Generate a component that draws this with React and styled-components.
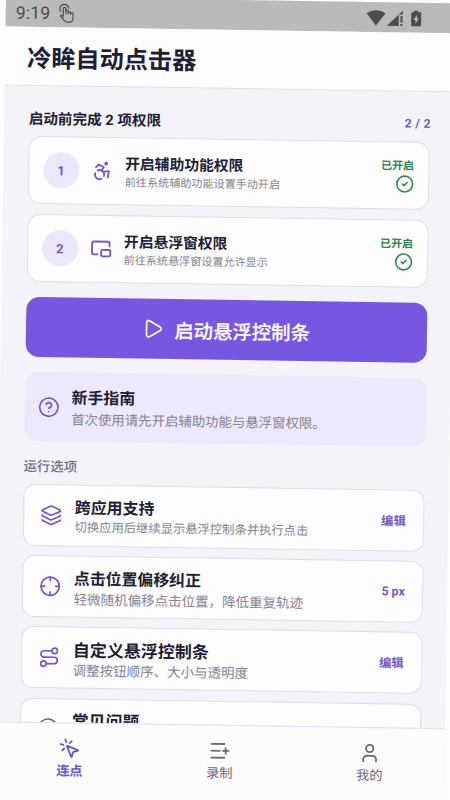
import React from 'react';
import {
  Accessibility,
  PictureInPicture2,
  CircleCheck,
  CircleQuestionMark,
  Play,
  Layers,
  Crosshair,
  Route,
  MousePointerClick,
  User,
} from 'lucide-react';
import styled, { createGlobalStyle } from 'styled-components';

const GlobalStyle = createGlobalStyle`
  * {
    box-sizing: border-box;
  }
  body {
    margin: 0;
    background: #fdfdfe;
    font-family: Roboto, 'Noto Sans CJK SC', sans-serif;
    color: #221d36;
  }
`

const Page = styled.div`
  width: 450px;
  height: 800px;
  overflow: hidden;
`

const Screen = styled.div`
  width: 450px;
  height: 820px;
  display: flex;
  flex-direction: column;
  background: #f4f3f9;
  transform-origin: 0 0;
  transform: translate(6px, -3.5px) rotate(0.86deg);
`

const StatusBar = styled.div`
  height: 29.5px;
  flex: none;
  display: flex;
  align-items: center;
  padding: 2px 33.5px 0 10px;
  background: #bababa;
  color: #4c4c4c;
`

const Clock = styled.span`
  font-size: 17.5px;
  letter-spacing: 0.2px;
  margin-right: 7px;
`

const StatusIcons = styled.div`
  margin-left: auto;
  display: flex;
  align-items: center;
  svg {
    display: block;
  }
`

const Header = styled.header`
  height: 59.5px;
  flex: none;
  display: flex;
  align-items: center;
  padding: 6px 0 0 22px;
  background: #fdfdfe;
  border-bottom: 1px solid #e1dfea;
`

const AppTitle = styled.h1`
  margin: 0;
  font-size: 24.2px;
  line-height: 30px;
  font-weight: 700;
`

const Content = styled.main`
  height: 636.3px;
  flex: none;
  overflow: hidden;
  padding: 23px 24.4px 0 24.6px;
`

const SectionHead = styled.div`
  display: flex;
  justify-content: space-between;
  align-items: center;
  height: 18px;
  margin-bottom: 9.2px;
`

const SectionTitle = styled.h2`
  margin: 0;
  padding-top: 2px;
  font-size: 14.6px;
  line-height: 18px;
  font-weight: 700;
`

const Count = styled.span`
  margin-right: -1px;
  font-size: 12.2px;
  font-weight: 700;
  letter-spacing: 0.3px;
  color: #7459c4;
`

const PermissionCard = styled.div`
  height: 68.2px;
  margin-bottom: 9.6px;
  padding: 0 14px;
  display: flex;
  align-items: center;
  gap: 12px;
  background: #fdfdfe;
  border: 1.3px solid #e0ddeb;
  border-radius: 13px;
`

const StepBadge = styled.div`
  width: 36px;
  height: 36px;
  flex: none;
  display: flex;
  align-items: center;
  justify-content: center;
  border-radius: 50%;
  background: #ece8fc;
  color: #7459c4;
  font-size: 13px;
  font-weight: 700;
`

const IconSlot = styled.div`
  display: flex;
  flex: none;
  color: #7355cb;
`

const Texts = styled.div`
  flex: 1;
  min-width: 0;
  display: flex;
  flex-direction: column;
  padding-top: ${props => props.$top || 0}px;
  white-space: nowrap;
`

const ItemTitle = styled.span`
  font-size: ${props => props.$size}px;
  line-height: 20px;
  font-weight: 700;
`

const ItemNote = styled.span`
  min-height: ${props => props.$line}px;
  font-size: ${props => props.$size}px;
  line-height: ${props => props.$line}px;
  color: #87838f;
`

const Granted = styled.div`
  display: flex;
  flex-direction: column;
  align-items: flex-end;
  color: #2f8553;
  font-size: 11px;
  line-height: 16px;
  font-weight: 700;
`

const StartButton = styled.button`
  width: 100%;
  height: 60px;
  margin: 15.3px 0 15px;
  padding: 0;
  display: flex;
  align-items: center;
  justify-content: center;
  gap: 10px;
  border: none;
  border-radius: 13px;
  background: #7857e0;
  color: #fdfcff;
  font-family: inherit;
  font-size: 19.4px;
  font-weight: 500;
  -webkit-text-stroke: 0.2px #fdfcff;
`

const Guide = styled.div`
  height: 68.6px;
  padding: 0 13px;
  display: flex;
  align-items: center;
  gap: 12px;
  border-radius: 12px;
  background: #ece9fc;
`

const GroupLabel = styled.div`
  margin: 17px 0 8.2px;
  font-size: 13.4px;
  line-height: 18px;
  font-weight: 500;
  color: #716d80;
`

const OptionRow = styled.div`
  height: 61.5px;
  margin-bottom: 9.6px;
  padding: 0 17px 0 16px;
  display: flex;
  align-items: center;
  gap: 13px;
  background: #fdfdfe;
  border: 1.3px solid #e0ddeb;
  border-radius: 12px;
`

const OptionAction = styled.span`
  font-size: 12.3px;
  font-weight: 700;
  color: #7459c4;
`

const TabBar = styled.nav`
  flex: 1;
  display: flex;
  align-items: flex-start;
  background: #fcfcfd;
  border-top: 1px solid #e1dfea;
`

const Tab = styled.div`
  flex: 1;
  padding-top: 14px;
  display: flex;
  flex-direction: column;
  align-items: center;
  gap: 3px;
  font-size: 13.2px;
  line-height: 18px;
  font-weight: ${props => props.$active ? 700 : 400};
  color: ${props => props.$active ? "#7052cc" : "#6d697a"};
`

const options = [
  { icon: Layers, title: '跨应用支持', note: '切换应用后继续显示悬浮控制条并执行点击', action: '编辑', size: 15.9, noteSize: 12.3, line: 18 },
  { icon: Crosshair, title: '点击位置偏移纠正', note: '轻微随机偏移点击位置，降低重复轨迹', action: '5 px', size: 15.9, noteSize: 13.5, line: 20 },
  { icon: Route, title: '自定义悬浮控制条', note: '调整按钮顺序、大小与透明度', action: '编辑', size: 17, noteSize: 13.5, line: 20 },
  { icon: CircleQuestionMark, title: '常见问题', note: '', action: '', size: 16.9, noteSize: 13.5, line: 20 },
]

function TapIcon() {
  return (
    <svg width="18" height="20" viewBox="0 0 17 20" fill="none" stroke="currentColor" strokeWidth="1.2" strokeLinecap="round" strokeLinejoin="round">
      <path d="M2.3 8.2A4.6 4.6 0 1 1 10.6 4.8" />
      <path d="M5 13.6V5.3a1.3 1.3 0 0 1 2.6 0v5M7.6 10V8a1.2 1.2 0 0 1 2.4 0v2.4M10 9.5a1.2 1.2 0 0 1 2.4.2v1.2M12.4 10.4a1.2 1.2 0 0 1 2.4.2v4.2c0 2.4-1.5 3.9-3.8 3.9H9.2c-1.4 0-2.2-.5-3-1.5l-4-4.6c.9-1.2 2-.8 2.8.3" />
    </svg>
  )
}

function ListAddIcon() {
  return (
    <svg width="22" height="22" viewBox="0 0 24 24" fill="none" stroke="currentColor" strokeWidth="2" strokeLinecap="round" strokeLinejoin="round">
      <path d="M17 4.500H3M12 12H3M17 19.500H3M18.500 9v6M21.500 12h-6" />
    </svg>
  )
}

function PermissionItem({ step, icon, title, note }) {
  const Icon = icon
  return (
    <PermissionCard>
      <StepBadge>{ step }</StepBadge>
      <IconSlot><Icon size={ 22 } /></IconSlot>
      <Texts $top={ 3 }>
        <ItemTitle $size={ 14.8 }>{ title }</ItemTitle>
        <ItemNote $size={ 11.1 } $line={ 17 }>{ note }</ItemNote>
      </Texts>
      <Granted>
        已开启
        <CircleCheck size={ 19 } />
      </Granted>
    </PermissionCard>
  )
}

function App() {
  return (
    <Page>
      <GlobalStyle />
      <Screen>
        <StatusBar>
          <Clock>9:19</Clock>
          <TapIcon />
          <StatusIcons>
            <svg width="56" height="18" viewBox="0 0 56 18" fill="currentColor">
              <path d="M0 4.4C5.4.2 13.2.2 18.6 4.4L9.3 16.4Z" />
              <path d="M20.3 16.6 36 1.3V5h-4v11.6Z" />
              <path d="M33.8 6.5H35.8V13H33.8ZM33.8 14.5H35.8V16.6H33.8Z" />
              <path fillRule="evenodd" d="M47.3 1h4v1.6h2.2q1 0 1 1v12q0 1-1 1h-8q-1 0-1-1v-12q0-1 1-1h1.8ZM50.2 5.2l-3.4 5.2h2v3.8l3.3-5.3h-1.9Z" />
            </svg>
          </StatusIcons>
        </StatusBar>
        <Header>
          <AppTitle>冷眸自动点击器</AppTitle>
        </Header>
        <Content>
          <SectionHead>
            <SectionTitle>启动前完成 2 项权限</SectionTitle>
            <Count>2 / 2</Count>
          </SectionHead>
          <PermissionItem step={ 1 } icon={ Accessibility } title="开启辅助功能权限" note="前往系统辅助功能设置手动开启" />
          <PermissionItem step={ 2 } icon={ PictureInPicture2 } title="开启悬浮窗权限" note="前往系统悬浮窗设置允许显示" />
          <StartButton>
            <Play size={ 22 } strokeWidth={ 1.8 } />
            启动悬浮控制条
          </StartButton>
          <Guide>
            <IconSlot><CircleQuestionMark size={ 22 } strokeWidth={ 1.8 } /></IconSlot>
            <Texts $top={ 5 }>
              <ItemTitle $size={ 15.9 }>新手指南</ItemTitle>
              <ItemNote $size={ 13.4 } $line={ 23 }>首次使用请先开启辅助功能与悬浮窗权限。</ItemNote>
            </Texts>
          </Guide>
          <GroupLabel>运行选项</GroupLabel>
          { options.map(({ icon: Icon, ...item }) => (
            <OptionRow key={ item.title }>
              <IconSlot><Icon size={ 22 } strokeWidth={ 1.8 } /></IconSlot>
              <Texts $top={ 5 }>
                <ItemTitle $size={ item.size }>{ item.title }</ItemTitle>
                <ItemNote $size={ item.noteSize } $line={ item.line }>{ item.note }</ItemNote>
              </Texts>
              <OptionAction>{ item.action }</OptionAction>
            </OptionRow>
          )) }
        </Content>
        <TabBar>
          <Tab $active>
            <MousePointerClick size={ 22 } />
            连点
          </Tab>
          <Tab>
            <ListAddIcon />
            录制
          </Tab>
          <Tab>
            <User size={ 22 } />
            我的
          </Tab>
        </TabBar>
      </Screen>
    </Page>
  );
}

export default App;
